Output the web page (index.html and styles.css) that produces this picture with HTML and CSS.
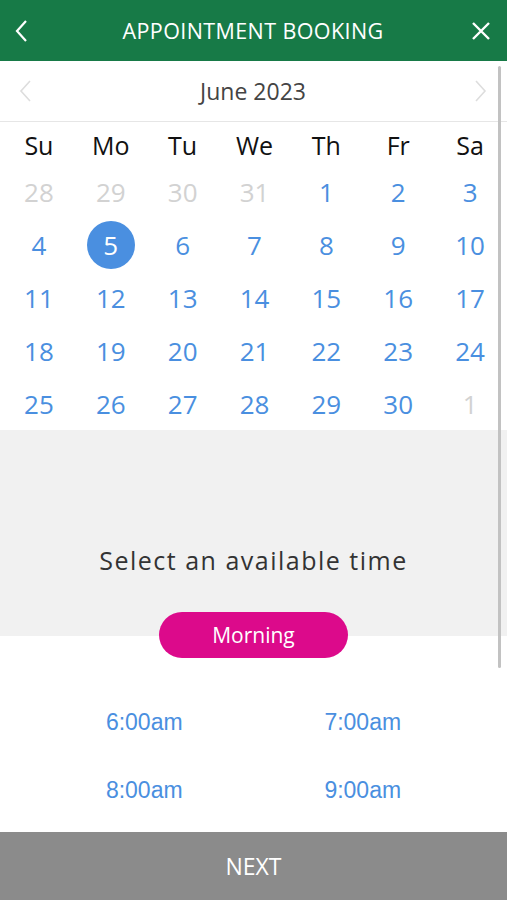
FILE: index.html
```html
<!DOCTYPE html>
<html>
<head>
  <meta charset="UTF-8">
  <meta name="viewport" content="width=device-width, initial-scale=1.0">
  <title>Appointment Booking</title>
  <link rel="stylesheet" href="styles.css">
</head>
<body>

  <header class="topbar">
    <a href="#" class="topbar-btn">
      <svg width="14" height="22" viewBox="0 0 14 22"><path d="M11 1 L2 11 L11 21" fill="none" stroke="#fff" stroke-width="2.2"/></svg>
    </a>
    <h1>APPOINTMENT BOOKING</h1>
    <a href="#" class="topbar-btn">
      <svg width="20" height="20" viewBox="0 0 20 20"><path d="M2 2 L18 18 M18 2 L2 18" fill="none" stroke="#fff" stroke-width="2.4"/></svg>
    </a>
  </header>

  <div class="page">

    <div class="month-bar">
      <a href="#" class="month-nav">
        <svg width="14" height="22" viewBox="0 0 14 22"><path d="M11 1 L2 11 L11 21" fill="none" stroke="#ddd" stroke-width="1.6"/></svg>
      </a>
      <div class="month-name">June 2023</div>
      <a href="#" class="month-nav">
        <svg width="14" height="22" viewBox="0 0 14 22"><path d="M3 1 L12 11 L3 21" fill="none" stroke="#ddd" stroke-width="1.6"/></svg>
      </a>
    </div>

    <div class="calendar">
      <div class="dow">Su</div>
      <div class="dow">Mo</div>
      <div class="dow">Tu</div>
      <div class="dow">We</div>
      <div class="dow">Th</div>
      <div class="dow">Fr</div>
      <div class="dow">Sa</div>

      <div class="day muted">28</div>
      <div class="day muted">29</div>
      <div class="day muted">30</div>
      <div class="day muted">31</div>
      <div class="day">1</div>
      <div class="day">2</div>
      <div class="day">3</div>

      <div class="day">4</div>
      <div class="day"><span class="selected">5</span></div>
      <div class="day">6</div>
      <div class="day">7</div>
      <div class="day">8</div>
      <div class="day">9</div>
      <div class="day">10</div>

      <div class="day">11</div>
      <div class="day">12</div>
      <div class="day">13</div>
      <div class="day">14</div>
      <div class="day">15</div>
      <div class="day">16</div>
      <div class="day">17</div>

      <div class="day">18</div>
      <div class="day">19</div>
      <div class="day">20</div>
      <div class="day">21</div>
      <div class="day">22</div>
      <div class="day">23</div>
      <div class="day">24</div>

      <div class="day">25</div>
      <div class="day">26</div>
      <div class="day">27</div>
      <div class="day">28</div>
      <div class="day">29</div>
      <div class="day">30</div>
      <div class="day muted">1</div>
    </div>

    <div class="time-header">
      <h2>Select an available time</h2>
      <button class="period-btn">Morning</button>
    </div>

    <div class="times">
      <a href="#">6:00am</a>
      <a href="#">7:00am</a>
      <a href="#">8:00am</a>
      <a href="#">9:00am</a>
    </div>

    <div class="scrollbar"></div>
  </div>

  <button class="next-btn">NEXT</button>

</body>
</html>
```

FILE: styles.css
```css
* {
  box-sizing: border-box;
  margin: 0;
  padding: 0;
}

body {
  font-family: 'Open Sans', sans-serif;
  background-color: #fff;
  width: 507px;
  height: 900px;
  overflow: hidden;
  display: flex;
  flex-direction: column;
}

a {
  text-decoration: none;
}

.topbar {
  height: 61px;
  flex-shrink: 0;
  background-color: #177a47;
  display: flex;
  align-items: center;
  justify-content: space-between;
  padding: 0 16px 0 15px;
}

.topbar h1 {
  color: #fff;
  font-size: 21.5px;
  font-weight: 400;
  letter-spacing: 0.4px;
  margin-left: 6px;
}

.topbar-btn {
  display: flex;
  align-items: center;
}

.page {
  position: relative;
  flex: 1;
  min-height: 0;
  overflow: hidden;
}

.month-bar {
  height: 61px;
  display: flex;
  align-items: center;
  justify-content: space-between;
  padding: 0 20px 0 19px;
  border-bottom: 1px solid #e6e6e6;
}

.month-nav {
  display: flex;
}

.month-name {
  font-size: 23px;
  color: #444;
}

.calendar {
  display: grid;
  grid-template-columns: repeat(7, 1fr);
  padding: 0 1px 0 3px;
  height: 308px;
  grid-template-rows: 44px repeat(5, 52.8px);
}

.dow {
  font-size: 25px;
  color: #111;
  text-align: center;
  line-height: 46px;
}

.day {
  font-size: 26px;
  color: #4a8fe0;
  display: flex;
  align-items: center;
  justify-content: center;
}

.day.muted {
  color: #d2d2d2;
}

.selected {
  width: 48px;
  height: 48px;
  border-radius: 50%;
  background-color: #4a8fe0;
  color: #fff;
  display: flex;
  align-items: center;
  justify-content: center;
}

.time-header {
  background-color: #f1f1f1;
  height: 206px;
  display: flex;
  flex-direction: column;
  align-items: center;
  padding-top: 113px;
}

.time-header h2 {
  font-size: 25px;
  font-weight: 400;
  color: #333;
  letter-spacing: 1.5px;
}

.period-btn {
  margin-top: 35px;
  width: 189px;
  height: 46px;
  border: none;
  border-radius: 23px;
  background-color: #dc0a8b;
  color: #fff;
  font-family: 'Open Sans', sans-serif;
  font-size: 21px;
  flex-shrink: 0;
}

.times {
  display: grid;
  grid-template-columns: 1fr 1fr;
  grid-auto-rows: 68px;
  padding: 70px 35px 0 35px;
}

.times a {
  font-family: 'Liberation Sans', Arial, sans-serif;
  font-size: 23px;
  color: #4a8fe0;
  text-align: center;
  line-height: 32px;
}

.scrollbar {
  position: absolute;
  top: 5px;
  right: 6px;
  width: 3px;
  height: 602px;
  background-color: #c2c2c2;
  border-radius: 2px;
}

.next-btn {
  height: 68px;
  width: 100%;
  flex-shrink: 0;
  border: none;
  background-color: #8b8b8b;
  color: #fff;
  font-family: 'Open Sans', sans-serif;
  font-size: 23px;
}
```
